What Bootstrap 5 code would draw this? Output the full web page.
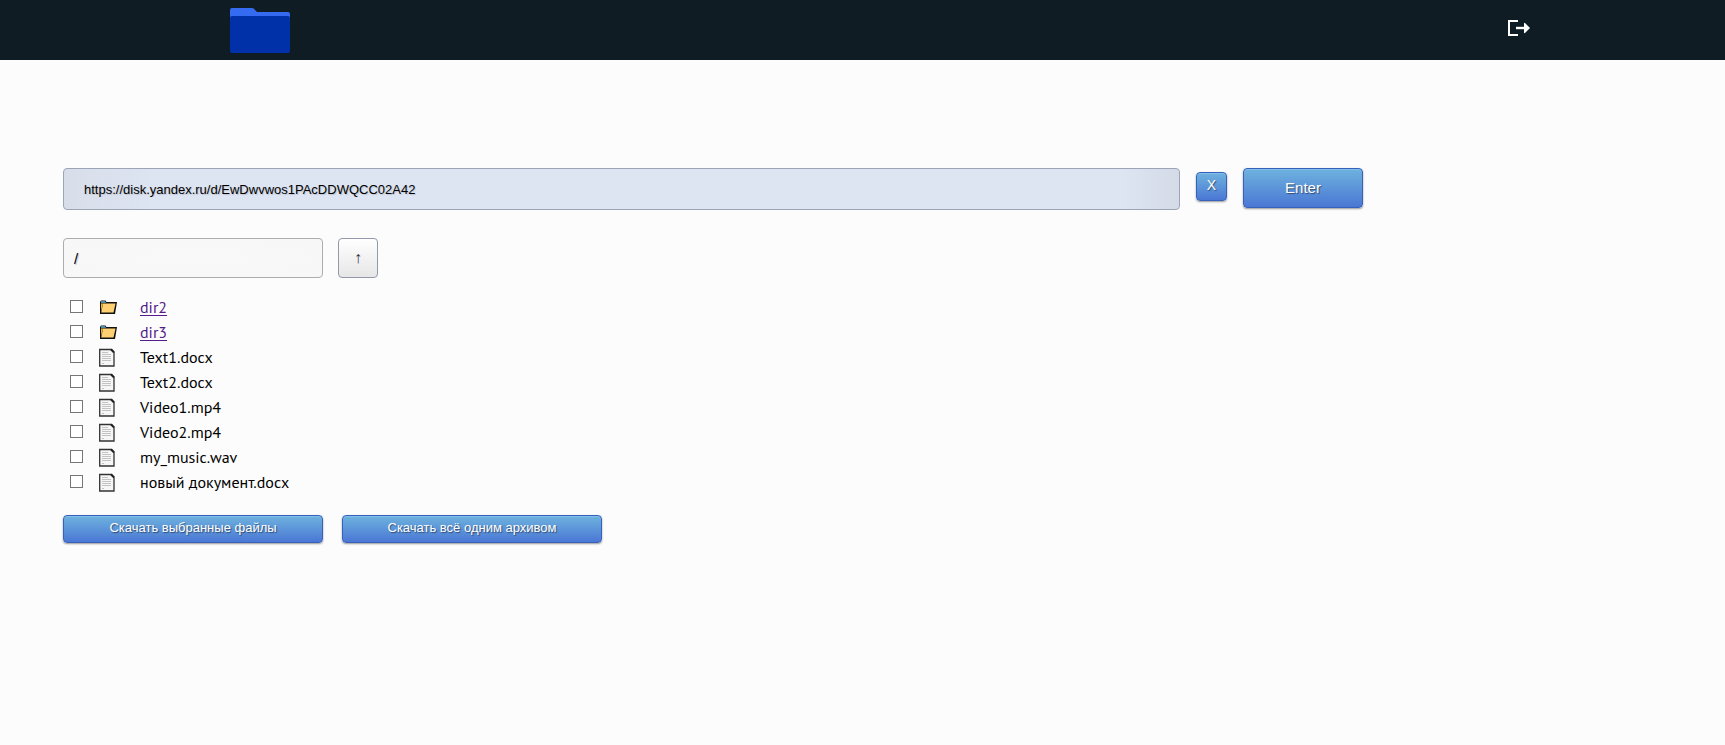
<!DOCTYPE html>
<html lang="ru">
<head>
<meta charset="utf-8">
<meta name="viewport" content="width=device-width, initial-scale=1">
<title>Файлы</title>
<link href="https://cdn.jsdelivr.net/npm/bootstrap@5.3.0/dist/css/bootstrap.min.css" rel="stylesheet">
<style>
body { background: #fcfcfc; color: #000; font-family: "PT Sans", "Noto Sans", sans-serif; }
.topbar { background: #0f1c23; height: 60px; padding: 0 195px 0 230px; }
.workspace { max-width: 1426px; padding: 108px 63px 60px; }
.field, .btn { font-family: "Liberation Sans", sans-serif; font-size: 13px; border-radius: 4px; }
.field { border: 1px solid #adadad; color: #000; text-shadow: 1px 1px 1px #bcc3d0; }
.field-url { height: 42px; padding: 0 20px; border-color: #9ca5b5; background: linear-gradient(90deg, #d8dee9, #dde4f2 8%, #dde4f2 95%, #d4dbe7); }
.field-path { width: 260px; height: 40px; padding: 0 10px; background: radial-gradient(#f9f9f9, #f7f7f7); font-size: 15px; }
.btn-blue { --bs-btn-color: #fff; --bs-btn-hover-color: #fff; --bs-btn-active-color: #fff; border: 1px solid #3762bc; background: linear-gradient(#6eb2de, #4a77d4); box-shadow: inset 0 1px 0 #83bdec, 0 1px 2px #0006; text-shadow: 1px 1px 1px #0007; line-height: 18px; padding: 0; }
.btn-clear { width: 31px; height: 29px; font-size: 14px; padding-bottom: 3px; }
.btn-enter { width: 120px; height: 40px; font-size: 15px; }
.btn-up { width: 40px; height: 40px; padding: 0; border: 1px solid #9299ac; background: linear-gradient(#fff, #e6e6e6); color: #333; font-family: "Liberation Serif", serif; font-size: 16px; }
.btn-download { width: 260px; height: 28px; padding-bottom: 2px; }
.path-row { gap: 15px; margin-bottom: 17px; }
.download-row { gap: 19px; margin-top: 20px; }
.files { font-size: 16px; line-height: 25px; }
.files td { padding: 0; height: 25px; vertical-align: middle; }
.files svg, .files input { display: block; }
.files input { appearance: none; width: 13px; height: 13px; margin: 0 0 2px 7px; border: 1px solid #767676; background: #fff; }
.files input:checked { background: #0d6efd; }
.files a { color: #551a8b; text-underline-offset: 2px; }
.pick-cell { width: 36px; }
.icon-cell { width: 41px; }
</style>
</head>
<body>
<svg class="d-none" aria-hidden="true">
  <symbol id="folder" viewBox="0 0 20 20">
    <path d="M1 4l1-1.500h4.500l1 1.500h10.500l-2 12H1z" fill="#111"/>
    <path d="M2 3h4l1 2H2z" fill="#4a8ba8"/>
    <path d="M2 5.500h2L2 13z" fill="#f5b426"/>
    <path d="M4 5.500h12.500l-2 9H2.200z" fill="#ffd072"/>
  </symbol>
  <symbol id="doc" viewBox="0 0 20 20">
    <path d="M.700 1.500h12l2.300 2.500v14H.700z" fill="#f6f6f6" stroke="#333" stroke-width="1.300"/>
    <path d="M12 1.500l3 3" stroke="#222" stroke-width="1.800"/>
    <path d="M3 4.500h6M3 6.500h9M3 8.500h9M3 10.500h9M3 12.500h9M3 15.500h2" stroke="#c3c3c3"/>
  </symbol>
</svg>
<header class="topbar d-flex justify-content-between align-items-center">
  <a href="#" aria-label="Главная"><svg class="d-block" width="60" height="45" viewBox="0 0 60 45">
    <path d="M2 0h20q2 0 3 2l2 2h31q2 0 2 2v6H0V2q0-2 2-2z" fill="#346bf0"/>
    <path d="M2 8h56q2 0 2 2v33q0 2-2 2H2q-2 0-2-2V10q0-2 2-2z" fill="#0031a8"/>
  </svg></a>
  <a href="#" aria-label="Выйти" class="pb-1"><svg class="d-block" width="22" height="18" viewBox="0 0 22 18" fill="none" stroke="#fff" stroke-width="2">
    <path d="M10 2H1v14h9" /><path d="M8 9h11" stroke-width="2.400"/><path d="M16 4.500q0-1 1-.5l5 5-5 5q-1 .5-1-.5z" fill="#fff" stroke="none"/>
  </svg></a>
</header>
<main class="workspace">
  <form class="d-flex align-items-start">
    <input type="text" class="field field-url flex-grow-1" aria-label="Ссылка" value="https://disk.yandex.ru/d/EwDwvwos1PAcDDWQCC02A42">
    <button type="button" class="btn btn-blue btn-clear ms-3 mt-1">X</button>
    <button type="button" class="btn btn-blue btn-enter ms-3">Enter</button>
  </form>
  <div class="path-row d-flex mt-4 pt-1">
    <input type="text" class="field field-path" aria-label="Путь" value="/">
    <button type="button" class="btn btn-up" aria-label="Наверх">↑</button>
  </div>
  <table class="files">
    <tbody>
      <tr><td class="pick-cell"><input type="checkbox" aria-label="dir2"></td><td class="icon-cell"><svg width="20" height="20"><use href="#folder"/></svg></td><td><a href="#">dir2</a></td></tr>
      <tr><td><input type="checkbox" aria-label="dir3"></td><td><svg width="20" height="20"><use href="#folder"/></svg></td><td><a href="#">dir3</a></td></tr>
      <tr><td><input type="checkbox" id="f1"></td><td><svg width="20" height="20"><use href="#doc"/></svg></td><td><label for="f1">Text1.docx</label></td></tr>
      <tr><td><input type="checkbox" id="f2"></td><td><svg width="20" height="20"><use href="#doc"/></svg></td><td><label for="f2">Text2.docx</label></td></tr>
      <tr><td><input type="checkbox" id="f3"></td><td><svg width="20" height="20"><use href="#doc"/></svg></td><td><label for="f3">Video1.mp4</label></td></tr>
      <tr><td><input type="checkbox" id="f4"></td><td><svg width="20" height="20"><use href="#doc"/></svg></td><td><label for="f4">Video2.mp4</label></td></tr>
      <tr><td><input type="checkbox" id="f5"></td><td><svg width="20" height="20"><use href="#doc"/></svg></td><td><label for="f5">my_music.wav</label></td></tr>
      <tr><td><input type="checkbox" id="f6"></td><td><svg width="20" height="20"><use href="#doc"/></svg></td><td><label for="f6">новый документ.docx</label></td></tr>
    </tbody>
  </table>
  <div class="download-row d-flex">
    <button type="button" class="btn btn-blue btn-download">Скачать выбранные файлы</button>
    <button type="button" class="btn btn-blue btn-download">Скачать всё одним архивом</button>
  </div>
</main>
<script src="https://cdn.jsdelivr.net/npm/bootstrap@5.3.0/dist/js/bootstrap.bundle.min.js"></script>
</body>
</html>
